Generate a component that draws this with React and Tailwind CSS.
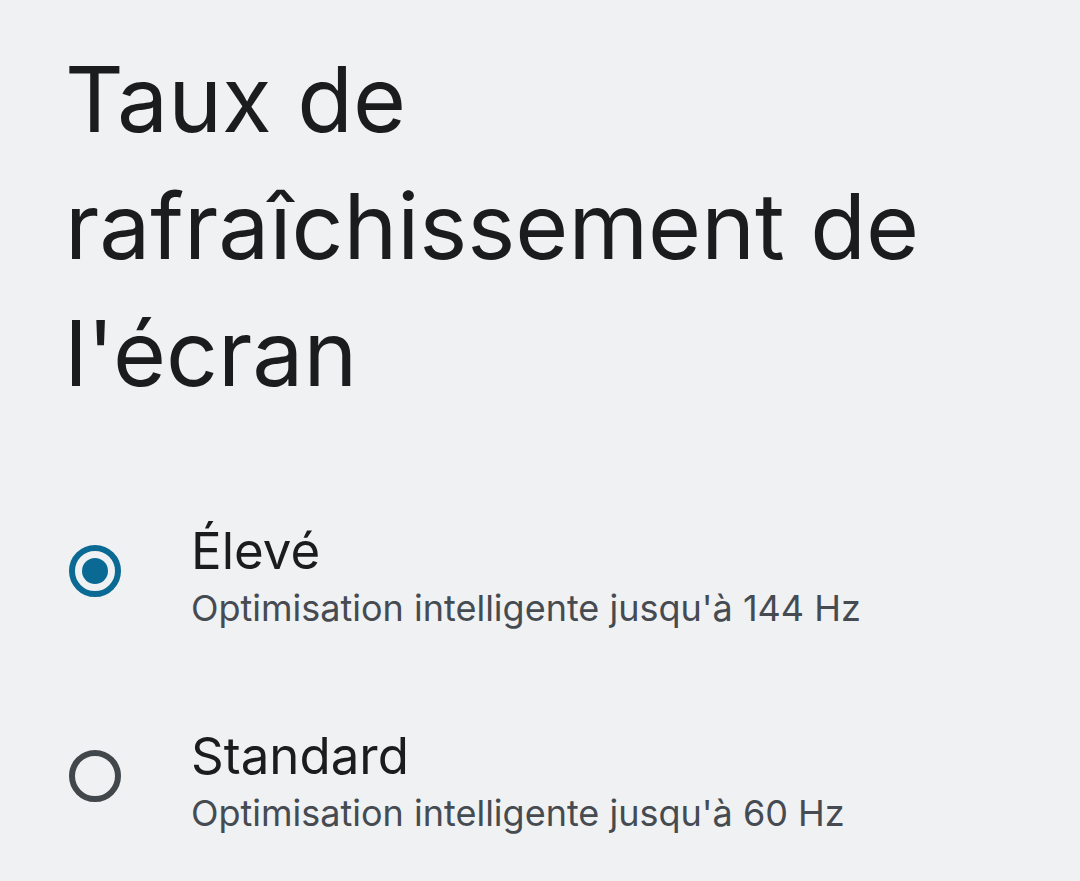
import React, { useState } from "react";

const options = [
  { id: "high", title: "Élevé", desc: "Optimisation intelligente jusqu'à 144 Hz" },
  { id: "std", title: "Standard", desc: "Optimisation intelligente jusqu'à 60 Hz" },
];

const Radio = ({ checked }) => (
  <div
    className={`mt-[24px] w-[52px] h-[52px] rounded-full border-[6px] flex items-center justify-center shrink-0 ${
      checked ? "border-[#0b6a94]" : "border-[#42474c]"
    }`}
  >
    {checked && <div className="w-[26px] h-[26px] rounded-full bg-[#0b6a94]" />}
  </div>
);

export default function App() {
  const [selected, setSelected] = useState("high");

  return (
    <div
      className="min-h-[881px] w-[1080px] bg-[#f0f1f3] text-[#1b1c1e] overflow-hidden"
      style={{ fontFamily: "Inter, 'Noto Sans', sans-serif" }}
    >
      <h1 className="pl-[65px] pt-[36px] pr-[40px] text-[91px] leading-[127px] font-normal">
        Taux de rafraîchissement de l'écran
      </h1>

      <div className="mt-[104px] flex flex-col gap-[93px]">
        {options.map((o) => (
          <button
            key={o.id}
            onClick={() => setSelected(o.id)}
            className="flex items-start text-left pl-[69px]"
          >
            <Radio checked={selected === o.id} />
            <div className="ml-[70px] flex flex-col">
              <span className="text-[51px] leading-[60px] text-[#1b1c1e]">{o.title}</span>
              <span className="mt-[2px] text-[36px] leading-[50px] text-[#454b51]">{o.desc}</span>
            </div>
          </button>
        ))}
      </div>
    </div>
  );
}
